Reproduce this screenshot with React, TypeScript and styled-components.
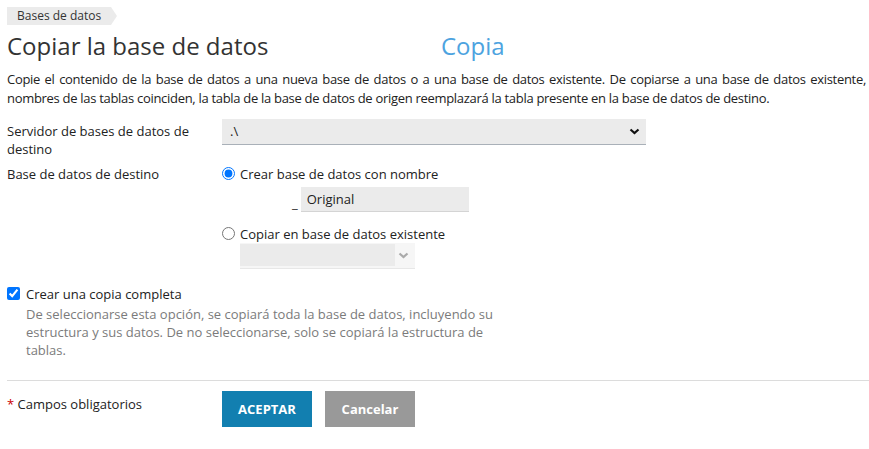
import React from 'react'
import styled, { createGlobalStyle } from 'styled-components'

const GlobalStyle = createGlobalStyle`
    body {
        margin: 0;
        font-family: 'Open Sans', 'Noto Sans', sans-serif;
        font-size: 13px;
        color: #222;
        background: #fff;
    }
`

const Page = styled.div`
    padding: 6px 3px 0 7px;
`

const Crumb = styled.div`
    display: inline-flex;
    align-items: center;
    height: 18px;
    padding: 0 10px 0 10px;
    margin-right: 6px;
    background: #ebebeb;
    font-size: 12px;
    color: #333;
    position: relative;
    &::after {
        content: '';
        position: absolute;
        right: -6px;
        top: 0;
        border-top: 9px solid transparent;
        border-bottom: 9px solid transparent;
        border-left: 6px solid #ebebeb;
    }
`

const TitleRow = styled.div`
    display: flex;
    align-items: baseline;
    margin-top: 4px;
`

const Title = styled.h1`
    margin: 0;
    width: 434px;
    font-size: 24px;
    font-weight: 400;
    color: #333;
    line-height: 32px;
`

const Subtitle = styled.span`
    font-size: 24px;
    color: #4da3e0;
`

const Intro = styled.p`
    margin: 8px 0 0;
    font-size: 13px;
    line-height: 19px;
    letter-spacing: -0.3px;
    color: #222;
    text-align: justify;
`

const Form = styled.div`
    display: grid;
    grid-template-columns: 215px 1fr;
    margin-top: 11px;
    row-gap: 4px;
`

const Label = styled.div`
    width: 190px;
    line-height: 18px;
    padding-top: 3px;
`

const Controls = styled.div<{ $offset?: number }>`
    display: flex;
    flex-direction: column;
    padding-top: ${({ $offset }) => $offset ?? 0}px;
`

const Select = styled.select<{ $width: number }>`
    appearance: none;
    width: ${({ $width }) => $width}px;
    height: 26px;
    border: none;
    border-bottom: 1px solid #a9b0b8;
    background: #ebebeb;
    font-family: inherit;
    font-size: 13px;
    color: #222;
    padding: 0 8px;
    &:disabled {
        background: #f3f3f3;
        border-bottom-color: #ddd;
        color: #888;
    }
`

const SelectWrap = styled.div<{ $indent?: number }>`
    position: relative;
    margin-left: ${({ $indent }) => $indent ?? 0}px;
    width: fit-content;
`

const Chevron = styled.svg`
    position: absolute;
    right: 6px;
    top: 9px;
    pointer-events: none;
`

const DisabledInner = styled.div`
    position: absolute;
    left: 0;
    top: 1px;
    width: 155px;
    height: 22px;
    background: #ebebeb;
    pointer-events: none;
`

const RadioRow = styled.label<{ $space?: number }>`
    display: flex;
    align-items: center;
    gap: 5px;
    line-height: 18px;
    margin-top: ${({ $space }) => $space ?? 0}px;
    input {
        margin: 0;
        width: 13px;
        height: 13px;
    }
`

const NameRow = styled.div`
    display: flex;
    align-items: flex-end;
    gap: 3px;
    margin: 4px 0 0 70px;
`

const Underscore = styled.span`
    line-height: 18px;
`

const TextInput = styled.input`
    width: 168px;
    height: 25px;
    box-sizing: border-box;
    border: none;
    border-bottom: 1px solid #d4d4d4;
    background: #ebebeb;
    font-family: inherit;
    font-size: 13px;
    color: #222;
    padding: 0 6px;
`

const CheckRow = styled.label`
    display: flex;
    align-items: center;
    gap: 6px;
    margin-top: 16px;
    line-height: 18px;
    input {
        margin: 0;
        width: 13px;
        height: 13px;
    }
`

const Hint = styled.p`
    margin: 2px 0 0 19px;
    width: 480px;
    line-height: 18px;
    color: #7b7b7b;
`

const Divider = styled.hr`
    border: none;
    border-top: 1px solid #dcdcdc;
    margin: 21px -3px 0 0;
`

const Footer = styled.div`
    display: grid;
    grid-template-columns: 215px 1fr;
    margin-top: 10px;
`

const Required = styled.div`
    padding-top: 4px;
    line-height: 18px;
`

const Star = styled.span`
    color: #c00;
`

const Buttons = styled.div`
    display: flex;
    gap: 13px;
`

const Button = styled.button<{ $primary?: boolean }>`
    width: 90px;
    height: 36px;
    border: none;
    font-family: inherit;
    font-size: 13px;
    font-weight: 700;
    color: #fff;
    background: ${({ $primary }) => ($primary ? '#127fb0' : '#999')};
`

const ChevronIcon = ({ color }: { color: string }) => (
    <Chevron width="11" height="7" viewBox="0 0 11 7">
        <path d="M1.5 1.5 L5.5 5 L9.5 1.5" fill="none" stroke={color} strokeWidth="2.2" />
    </Chevron>
)

export default function App() {
    return (
        <Page>
            <GlobalStyle />
            <Crumb>Bases de datos</Crumb>
            <TitleRow>
                <Title>Copiar la base de datos</Title>
                <Subtitle>Copia</Subtitle>
            </TitleRow>
            <Intro>
                Copie el contenido de la base de datos a una nueva base de datos o a una base de datos existente. De copiarse a una base de datos existente, nombres de las tablas coinciden, la tabla de la base de datos de origen reemplazará la tabla presente en la base de datos de destino.
            </Intro>
            <Form>
                <Label>Servidor de bases de datos de destino</Label>
                <Controls>
                    <SelectWrap>
                        <Select $width={424} defaultValue=".\">
                            <option value=".\">.\</option>
                        </Select>
                        <ChevronIcon color="#111" />
                    </SelectWrap>
                </Controls>
                <Label>Base de datos de destino</Label>
                <Controls $offset={3}>
                    <RadioRow>
                        <input type="radio" name="target" defaultChecked />
                        Crear base de datos con nombre
                    </RadioRow>
                    <NameRow>
                        <Underscore>_</Underscore>
                        <TextInput defaultValue="Original" />
                    </NameRow>
                    <RadioRow $space={13}>
                        <input type="radio" name="target" />
                        Copiar en base de datos existente
                    </RadioRow>
                    <SelectWrap $indent={18}>
                        <Select $width={175} disabled />
                        <DisabledInner />
                        <ChevronIcon color="#aaa" />
                    </SelectWrap>
                </Controls>
            </Form>
            <CheckRow>
                <input type="checkbox" defaultChecked />
                Crear una copia completa
            </CheckRow>
            <Hint>
                De seleccionarse esta opción, se copiará toda la base de datos, incluyendo su estructura y sus datos. De no seleccionarse, solo se copiará la estructura de tablas.
            </Hint>
            <Divider />
            <Footer>
                <Required>
                    <Star>*</Star> Campos obligatorios
                </Required>
                <Buttons>
                    <Button $primary>ACEPTAR</Button>
                    <Button>Cancelar</Button>
                </Buttons>
            </Footer>
        </Page>
    )
}
